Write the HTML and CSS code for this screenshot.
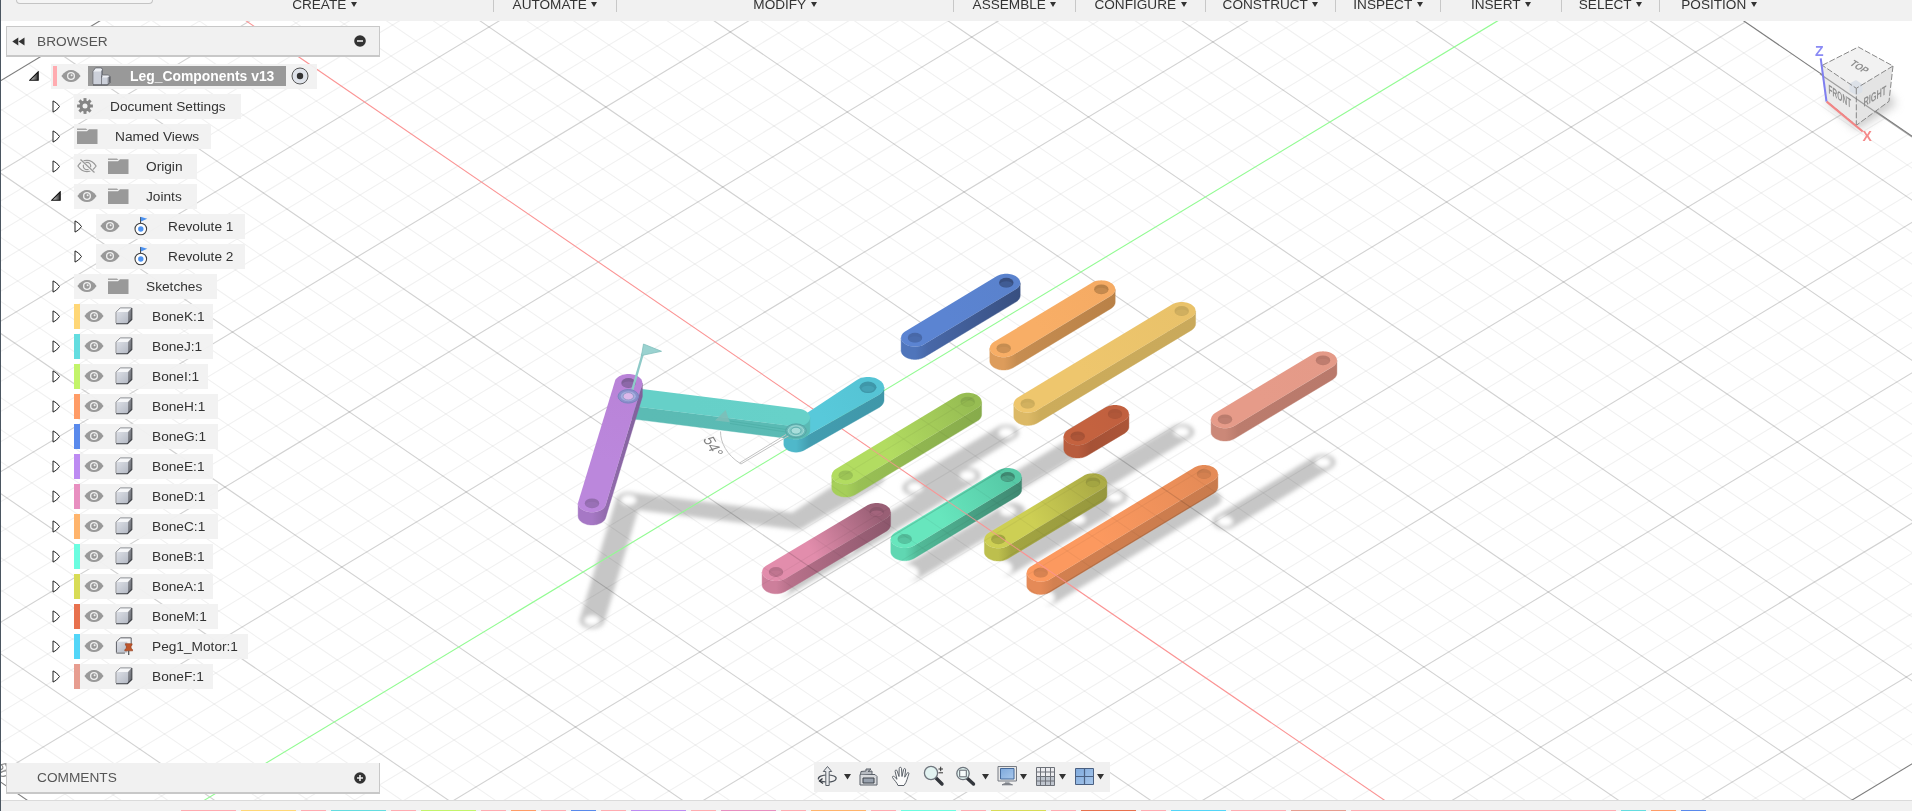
FILE: index.html
```html
<!DOCTYPE html>
<html lang="en">
<head>
<meta charset="utf-8">
<title>Leg_Components v13</title>
<link rel="stylesheet" href="styles.css">
</head>
<body>
<svg class="defs" width="0" height="0" aria-hidden="true">
  <defs>
    <linearGradient id="steel" x1="0" y1="0" x2="1" y2="1"><stop offset="0" stop-color="#dcdfe6"/><stop offset="1" stop-color="#b4b9c4"/></linearGradient>
    <linearGradient id="steelDark" x1="0" y1="0" x2="1" y2="1"><stop offset="0" stop-color="#9a9ca3"/><stop offset="1" stop-color="#5c5f66"/></linearGradient>
    <linearGradient id="tri" x1="0" y1="0" x2="1" y2="0"><stop offset="0.2" stop-color="#c4c4c4"/><stop offset="1" stop-color="#2c2c2c"/></linearGradient>
    <linearGradient id="screen" x1="0" y1="0" x2="1" y2="1"><stop offset="0" stop-color="#7ea9dc"/><stop offset="1" stop-color="#a9c8ec"/></linearGradient>
  </defs>
  <symbol id="eye" viewBox="0 0 20 14"><path d="M0.4 7C3.4 2.6 6.5.9 10 .9s6.600 1.700 9.600 6.100c-3 4.400-6.100 6.100-9.600 6.100S3.400 11.400.4 7Z" fill="#999"/><circle cx="10" cy="7" r="4" fill="#f1f1f1"/><circle cx="10" cy="7" r="2.700" fill="#999"/><circle cx="10.600" cy="6.300" r="1" fill="#eee"/></symbol>
  <symbol id="eye-off" viewBox="0 0 20 14"><path d="M.9 7C3.500 3 6.500 1.400 10 1.400S16.500 3 19.100 7C16.500 11 13.500 12.600 10 12.600S3.500 11 .9 7Z" fill="none" stroke="#999" stroke-width="1.200"/><circle cx="10" cy="7" r="3.700" fill="none" stroke="#999" stroke-width="1.200"/><circle cx="10" cy="7" r="1.300" fill="#999"/><path d="M3 .5 17 13.500" stroke="#f1f1f1" stroke-width="3"/><path d="M3.500.5 17.500 13.500" stroke="#999" stroke-width="1.200"/></symbol>
  <symbol id="folder" viewBox="0 0 21 16"><path d="M0 .5h9l1.500 1.600H0Z" fill="#a5a5a5"/><path d="M0 3.200h10l2-2h8.500V16H0Z" fill="#999"/></symbol>
  <symbol id="gear" viewBox="-8 -8 16 16"><g fill="#858585"><circle r="5.600"/><path d="M-1.500-7.900h3v15.800h-3Z"/><path d="M-1.500-7.900h3v15.800h-3Z" transform="rotate(45)"/><path d="M-1.500-7.900h3v15.800h-3Z" transform="rotate(90)"/><path d="M-1.500-7.900h3v15.800h-3Z" transform="rotate(135)"/></g><circle r="2.500" fill="#f1f1f1"/></symbol>
  <symbol id="cube" viewBox="0 0 18 18"><path d="M1.500 5 5.500 1h11l-4 4Z" fill="#f6f7f9"/><path d="M13 5l3.500-4v11.500l-3.500 4Z" fill="url(#steelDark)"/><path d="M1.500 5h11.500v11.500h-11.500Z" fill="url(#steel)"/><path d="M1 16V5.200L5.200.9h11.400" fill="none" stroke="#8d8f95"/><path d="M1 16.700h11.400l4.400-4.200V1" fill="none" stroke="#3a3c42" stroke-width="1.100"/></symbol>
  <symbol id="assembly" viewBox="0 0 19 19"><path d="M1 4 3.500 1H9l1.500 2v5h6l1.500 1.500v6.500L15.500 18H2L1 16.500Z" fill="#eef0f5"/><path d="M1.500 4.500H9v13H1.500ZM10 10.500h5.500v7H10Z" fill="#ccd0da"/><path d="M9 4 10.500 2.500V10L9 11ZM15.500 10.500 17.800 8.800v6.700l-2.300 2.200Z" fill="#8d9099"/><path d="M9.500 8.500v9M1 17V4.300L3.500.9h6l1 1.600V8h6l1.500 1.500" fill="none" stroke="#62656c" stroke-width=".8"/><path d="M1 17.900h14.600l2.300-2.300V9.500" fill="none" stroke="#3a3c42"/></symbol>
  <symbol id="pin" viewBox="0 0 18 19"><path d="M1.500 5 5.500 1h11l-4 4Z" fill="#f6f7f9"/><path d="M1.500 5h11v11.500h-11Z" fill="url(#steel)"/><path d="M1 16.500V5.200L5.200.9h11.400V7M1 17h9" fill="none" stroke="#55575d"/><path d="M10.500 7h7v1.700l-1 .5v2.600c1 .6 1.700 1.500 1.700 2.800H9.800c0-1.300.7-2.200 1.700-2.800V9.200l-1-.5Z" fill="#c0562c" stroke="#8a3514" stroke-width=".6"/><path d="M14 14.500v4.400" stroke="#444" stroke-width="1.200"/></symbol>
  <symbol id="joint" viewBox="0 0 14 20"><path d="M6.500 8V1" stroke="#4a4a4a"/><path d="M6.500.7 13.300 2.700 7 5.600Z" fill="#4c92f0"/><circle cx="6.800" cy="13" r="5.800" fill="#fff" stroke="#3f3f3f" stroke-width="1.100"/><circle cx="6.800" cy="13" r="2.700" fill="#4c92f0"/></symbol>
  <symbol id="closed" viewBox="0 0 9 13"><path d="M1 .9v11.200L4.500 10 7.500 6.500 4.500 3Z" fill="#fff" stroke="#222" stroke-width="1"/></symbol>
  <symbol id="open" viewBox="0 0 10 10"><path d="M9.200.8v8.400H.8Z" fill="url(#tri)" stroke="#111" stroke-width="1.100"/></symbol>
</svg>

<svg class="scene" id="scene" width="1912" height="811" viewBox="0 0 1912 811">
  <defs>
    <filter id="soft" x="-20%" y="-20%" width="140%" height="140%"><feGaussianBlur stdDeviation="2"/></filter>
    <filter id="softer" x="-30%" y="-30%" width="160%" height="160%"><feGaussianBlur stdDeviation="5"/></filter>
    <clipPath id="ghost"></clipPath>
  </defs>
  <g id="shadows" filter="url(#soft)"></g>
  <g id="grid"></g>
  <g id="bones"></g>
  <use href="#grid" clip-path="url(#ghost)" opacity=".75"/>
  <g class="joint-marks">
    <path d="M632 391 643 353" stroke="#8fcac8" stroke-width="2.400"/>
    <path d="M643.500 344 661.500 351.300 641.500 355.500Z" fill="#9ad2d0" stroke="#83bfbd" stroke-width=".8"/>
    <ellipse cx="628.300" cy="396.300" rx="10.300" ry="6.800" fill="#8a90cc" stroke="#7a84bf"/>
    <ellipse cx="628.300" cy="396.300" rx="7.500" ry="4.900" fill="#a3aede"/>
    <ellipse cx="628.300" cy="396.300" rx="5.200" ry="3.700" fill="#dcb8ea" stroke="#8a8fc2" stroke-width=".8"/>
    <path d="M720.500 431.500c0 11 6 23.500 20.500 32.500M741 464 789 435.500M739.500 463 786 434.500" fill="none" stroke="#c2c2c2" stroke-width="1"/>
    <path d="M730 421 786 429.500M730 423.500 786 432" stroke="#4fb0a8" stroke-width=".9"/>
    <path d="M715 420.500 725.700 410 729.700 422.300Z" fill="#7fbdb7" opacity=".85"/>
    <ellipse cx="796" cy="430.700" rx="10.300" ry="6.800" fill="#66b8b6" stroke="#57a3a4"/>
    <ellipse cx="796" cy="430.700" rx="7.800" ry="5" fill="#85c9c7" stroke="#aadedb" stroke-width=".8"/>
    <ellipse cx="796" cy="430.700" rx="5" ry="3.500" fill="#a9dedb" stroke="#4fa5a3" stroke-width=".8"/>
    <text class="angle" transform="matrix(.45 .75 -.95 .3 702.500 439)">54°</text>
  </g>
  <text class="edge-label" transform="matrix(.3 .8 -.9 .3 -4 765)">50</text>
  <g class="viewcube">
    <path d="M1824 100 1857 130 1897 104 1880 84Z" fill="#999" opacity=".5" filter="url(#softer)"/>
    <path d="M1822.300 65.300 1858.300 47 1893 66 1856.300 88.300Z" fill="#f2f2f2"/>
    <path d="M1822.300 65.300 1856.300 88.300V125.300L1826.700 101.300Z" fill="#eaeaea"/>
    <path d="M1893 66 1856.300 88.300V125.300L1889 101.300Z" fill="#e4e4e4"/>
    <path d="M1849.500 83.500 1856 80l6.500 4.500v7.500L1856.300 95l-6.800-3.500Z" fill="#dce1e8"/>
    <path d="M1822.300 65.300 1858.300 47 1893 66 1856.300 88.300ZM1856.300 88.300V125.300M1893 66 1889 101.300 1856.300 125.300 1826.700 101.300" fill="none" stroke="#888" stroke-width="1" stroke-dasharray="6 2"/>
    <path d="M1820 74.100 1912 137.100" stroke="#777" stroke-opacity=".65" stroke-width="1.200"/>
    <path d="M1820.700 58.300 1826.500 101.500" stroke="#7f7ff0" stroke-width="2"/>
    <path d="M1826.700 101.700 1862.700 131.500" stroke="#f28585" stroke-width="2.200"/>
    <text class="face" transform="matrix(.7 .42 -.7 .62 1849 64.500)">TOP</text>
    <text class="face" transform="matrix(.6 .4 .02 1.150 1828.500 93)">FRONT</text>
    <text class="face" transform="matrix(.66 -.38 -.02 1.150 1863.500 107)">RIGHT</text>
    <text class="axis z" x="1815" y="56">Z</text>
    <text class="axis x" x="1862.500" y="140.500">X</text>
  </g>
</svg>

<div class="app">
  <header class="toolbar">
    <span class="workspace"></span>
    <nav class="menus">
      <span>CREATE<i></i></span><span>AUTOMATE<i></i></span><span>MODIFY<i></i></span><span>ASSEMBLE<i></i></span><span>CONFIGURE<i></i></span><span>CONSTRUCT<i></i></span><span>INSPECT<i></i></span><span>INSERT<i></i></span><span>SELECT<i></i></span><span>POSITION<i></i></span>
    </nav>
  </header>

  <main class="viewport">
    <section class="browser">
      <div class="panel-title">
        <svg width="13" height="9" viewBox="0 0 13 9"><path d="M6.300.5v8L.3 4.500ZM12.500.5v8l-6-4Z" fill="#333"/></svg>
        <span>BROWSER</span>
        <svg class="toggle" width="12" height="12" viewBox="0 0 12 12"><circle cx="6" cy="6" r="5.800" fill="#333"/><path d="M3 6h6" stroke="#eee" stroke-width="1.600"/></svg>
      </div>
      <ul class="tree">
        <li class="root"><svg class="arrow open"><use href="#open"/></svg><div class="row"><b class="root-bar"></b><svg class="eye"><use href="#eye"/></svg><div class="root-name"><svg class="asm"><use href="#assembly"/></svg><span>Leg_Components v13</span></div><svg class="radio" viewBox="0 0 18 18"><circle cx="9" cy="9" r="8" fill="#dfe3ea" stroke="#555"/><circle cx="9" cy="9" r="3.200" fill="#333"/></svg></div></li>
        <li class="settings"><svg class="arrow"><use href="#closed"/></svg><div class="row"><svg class="gear"><use href="#gear"/></svg><span>Document Settings</span></div></li>
        <li class="views"><svg class="arrow"><use href="#closed"/></svg><div class="row"><svg class="folder"><use href="#folder"/></svg><span>Named Views</span></div></li>
        <li class="group"><svg class="arrow"><use href="#closed"/></svg><div class="row w123"><svg class="eye"><use href="#eye-off"/></svg><svg class="folder"><use href="#folder"/></svg><span>Origin</span></div></li>
        <li class="group"><svg class="arrow open"><use href="#open"/></svg><div class="row w123"><svg class="eye"><use href="#eye"/></svg><svg class="folder"><use href="#folder"/></svg><span>Joints</span></div></li>
        <li class="joint"><svg class="arrow"><use href="#closed"/></svg><div class="row"><svg class="eye"><use href="#eye"/></svg><svg class="jicon"><use href="#joint"/></svg><span>Revolute 1</span></div></li>
        <li class="joint"><svg class="arrow"><use href="#closed"/></svg><div class="row"><svg class="eye"><use href="#eye"/></svg><svg class="jicon"><use href="#joint"/></svg><span>Revolute 2</span></div></li>
        <li class="group"><svg class="arrow"><use href="#closed"/></svg><div class="row w143"><svg class="eye"><use href="#eye"/></svg><svg class="folder"><use href="#folder"/></svg><span>Sketches</span></div></li>
        <li class="bone"><svg class="arrow"><use href="#closed"/></svg><div class="row yellow"><svg class="eye"><use href="#eye"/></svg><svg class="cube"><use href="#cube"/></svg><span>BoneK:1</span></div></li>
        <li class="bone"><svg class="arrow"><use href="#closed"/></svg><div class="row cyan"><svg class="eye"><use href="#eye"/></svg><svg class="cube"><use href="#cube"/></svg><span>BoneJ:1</span></div></li>
        <li class="bone"><svg class="arrow"><use href="#closed"/></svg><div class="row lime narrow"><svg class="eye"><use href="#eye"/></svg><svg class="cube"><use href="#cube"/></svg><span>BoneI:1</span></div></li>
        <li class="bone"><svg class="arrow"><use href="#closed"/></svg><div class="row orange wide"><svg class="eye"><use href="#eye"/></svg><svg class="cube"><use href="#cube"/></svg><span>BoneH:1</span></div></li>
        <li class="bone"><svg class="arrow"><use href="#closed"/></svg><div class="row blue wide"><svg class="eye"><use href="#eye"/></svg><svg class="cube"><use href="#cube"/></svg><span>BoneG:1</span></div></li>
        <li class="bone"><svg class="arrow"><use href="#closed"/></svg><div class="row purple"><svg class="eye"><use href="#eye"/></svg><svg class="cube"><use href="#cube"/></svg><span>BoneE:1</span></div></li>
        <li class="bone"><svg class="arrow"><use href="#closed"/></svg><div class="row magenta wide"><svg class="eye"><use href="#eye"/></svg><svg class="cube"><use href="#cube"/></svg><span>BoneD:1</span></div></li>
        <li class="bone"><svg class="arrow"><use href="#closed"/></svg><div class="row apricot wide"><svg class="eye"><use href="#eye"/></svg><svg class="cube"><use href="#cube"/></svg><span>BoneC:1</span></div></li>
        <li class="bone"><svg class="arrow"><use href="#closed"/></svg><div class="row mint"><svg class="eye"><use href="#eye"/></svg><svg class="cube"><use href="#cube"/></svg><span>BoneB:1</span></div></li>
        <li class="bone"><svg class="arrow"><use href="#closed"/></svg><div class="row olive"><svg class="eye"><use href="#eye"/></svg><svg class="cube"><use href="#cube"/></svg><span>BoneA:1</span></div></li>
        <li class="bone"><svg class="arrow"><use href="#closed"/></svg><div class="row rust wide"><svg class="eye"><use href="#eye"/></svg><svg class="cube"><use href="#cube"/></svg><span>BoneM:1</span></div></li>
        <li class="bone"><svg class="arrow"><use href="#closed"/></svg><div class="row sky widest"><svg class="eye"><use href="#eye"/></svg><svg class="cube"><use href="#pin"/></svg><span>Peg1_Motor:1</span></div></li>
        <li class="bone"><svg class="arrow"><use href="#closed"/></svg><div class="row salmon"><svg class="eye"><use href="#eye"/></svg><svg class="cube"><use href="#cube"/></svg><span>BoneF:1</span></div></li>
      </ul>
    </section>

    <section class="comments">
      <span>COMMENTS</span>
      <svg width="12" height="12" viewBox="0 0 12 12"><circle cx="6" cy="6" r="5.800" fill="#333"/><path d="M3 6h6M6 3v6" stroke="#eee" stroke-width="1.600"/></svg>
    </section>

    <nav class="navbar">
      <svg width="296" height="30" viewBox="0 0 296 30">
        <g stroke="#5b6169" fill="none">
          <path d="M4.500 17.500c-1-3 4-4.500 9-4.500s9.500 1.500 8.500 4-5 3-8.500 3-6-.5-8-1.500" stroke="#4a5058" stroke-width="1.200"/>
          <path d="M11.800 23.500V9.500H9.300L13.500 4.500l4.200 5h-2.500v14Z" fill="#e8eaed"/>
          <path d="M8.500 16.500 5.500 19l3.500 2.500" stroke="#30353c" stroke-width="1.300"/>
          <path d="M46 12.500h15l2 2v8.500H46Z" fill="#d8dadd"/><path d="M49 16h11v5H49Z" fill="#98a1ad" stroke="#3c424b"/><path d="M46.500 12.500 47 9.500l5-.5v-2l5 0-3 2.500 4-.5v3" fill="#b7bbc1"/>
          <path d="M84 23.500c-1-3-4-5.500-5.500-8-.6-1.400 1.300-1.700 2.200-.5l2.300 2.300-1.900-8c-.1-1.700 1.800-1.700 2.100-.2l1.800 5.400.2-8c0-1.600 2.200-1.600 2.300 0l.5 8 1.600-7c.3-1.500 2.200-1.200 2 .3l-.9 7.400 2.400-4c.8-1.200 2.300-.5 1.700.8-1.300 3.100-1.700 7.600-4.800 11.500Z" fill="#fbfbfb"/>
        </g>
        <path d="m121.500 15.500 6.500 6.500" stroke="#33373d" stroke-width="3.400" stroke-linecap="round"/><circle cx="117" cy="11" r="6.600" fill="#e2f3f1" stroke="#6e757d" stroke-width="1.300"/><path d="M124.500 7h4.500M126.700 4.700v4.500M124.500 10.800h4.500" stroke="#333" stroke-width="1"/>
        <path d="m153.500 16.500 6 5.500" stroke="#33373d" stroke-width="3.400" stroke-linecap="round"/><circle cx="149" cy="11.500" r="6.200" fill="#e2f3f1" stroke="#6e757d" stroke-width="1.300"/><path d="M145.700 8.200h6.600v6.600h-6.600Z" fill="#f5fbfb" stroke="#60666e"/>
        <path d="M184 4.500h18.500v14.500H184Z" fill="#e7e7e7" stroke="#777b82"/><path d="M186.500 6.500h13.500v10.500h-13.500Z" fill="url(#screen)" stroke="#456a9c"/><path d="M191 19h4.500v3H191Z" fill="#a9adb3"/><path d="M188 22.800c2-1.600 8-1.600 10.500 0Z" fill="#7a7e85" stroke="#7a7e85"/>
        <path d="M222.500 5.500h18v18h-18Z" fill="#ececef"/><path d="M222.500 14.500h18v9h-18Z" fill="#bfc5ce"/><path d="M222.500 5.500h18v18h-18ZM226.500 5.500v18M231.500 5.500v18M236.500 5.500v18M222.500 10h18M222.500 14.500h18M222.500 19h18" fill="none" stroke="#6d7178"/>
        <path d="M261.500 6.500h18v16h-18Z" fill="url(#screen)" stroke="#4a6082"/><path d="M270.500 6.500v16M261.500 14.500h18" stroke="#4a6082" stroke-width="1.200"/>
        <path d="M30 12h7l-3.500 5.500ZM168 12h7l-3.500 5.500ZM206 12h7l-3.500 5.500ZM245 12h7l-3.500 5.500ZM283 12h7l-3.500 5.500Z" fill="#333"/>
      </svg>
    </nav>
  </main>

  <footer class="timeline" id="timeline"></footer>
</div>
<script src="scene.js"></script>
</body>
</html>
```

FILE: styles.css
```css
* { box-sizing: border-box; }
body {
  margin: 0;
  width: 1912px;
  height: 811px;
  overflow: hidden;
  position: relative;
  background: #fff;
  color: #333;
  font: 13.7px "Liberation Sans", Arial, sans-serif;
}
.defs, .scene { position: absolute; left: 0; top: 0; }
.app {
  position: relative;
  height: 811px;
  display: flex;
  flex-direction: column;
  border-left: 1px solid #4b5661;
}

/* top toolbar */
.toolbar { height: 21px; background: #f1f1f1; display: flex; overflow: hidden; }
.workspace {
  width: 137px; height: 4px; margin-left: 15px; margin-right: 3px;
  border: 1px solid #c4c4c4; border-top: 0; border-radius: 0 0 5px 5px; background: #f5f5f5;
}
.menus {
  display: grid;
  grid-template-columns: 338px 123px 337px 122px 130px 130px 105px 121px 98px 118px;
}
.menus span {
  height: 12px; line-height: 10px;
  display: flex; justify-content: center; align-items: flex-start;
  border-right: 1px solid #c8c8c8;
  font-size: 13.6px;
}
.menus span:last-child { border-right: 0; }
.menus i {
  margin: 1.5px 0 0 4.5px;
  border: 3.5px solid transparent; border-top: 5px solid #333; border-bottom: 0;
}

.viewport { flex: 1; display: flex; flex-direction: column; position: relative; }

/* browser panel */
.browser { width: 374px; margin: 5px 0 0 5px; }
.panel-title {
  height: 31px; padding: 0 13px 0 5px;
  display: flex; align-items: center;
  background: #f1f1f1; border: 1px solid #c8c8c8; border-bottom-width: 2px;
  color: #555;
}
.panel-title span { margin-left: 12px; font-size: 13.7px; }
.panel-title .toggle { margin-left: auto; }
.tree { list-style: none; margin: 4px 0 0; padding: 0; }
.tree li { height: 30px; display: flex; align-items: center; padding-left: 46px; }
.tree .row {
  height: 25px; display: flex; align-items: center;
  background: rgba(241, 241, 241, .95);
}
.tree svg { flex: none; }
.arrow { width: 9px; height: 13px; margin-right: 13px; }
.arrow.open { width: 10px; height: 10px; margin-right: 12px; margin-left: -1px; padding: 0; }
.group .arrow.open { margin-right: 13px; }
.eye { width: 20px; height: 14px; }
.folder { width: 21px; height: 16px; }
.cube { width: 18px; height: 18px; }

.tree .root { padding-left: 24px; }
.root .row { width: 266px; margin-left: 0; padding-left: 2px; }
.root-bar { width: 4px; height: 20px; background: #ffabb0; margin-right: 4px; }
.root-name {
  width: 198px; height: 20px; margin: 0 5px 0 7px; padding-left: 4px;
  display: flex; align-items: center; background: #999; color: #fff; font-weight: bold;
}
.root-name .asm { width: 19px; height: 19px; }
.root-name span { margin-left: 19px; font-size: 13.9px; white-space: nowrap; }
.radio { width: 18px; height: 18px; }
.root .arrow.open { margin-left: -1px; margin-right: 12px; }

.settings .row { width: 167px; padding-left: 3px; }
.gear { width: 16px; height: 16px; }
.settings span { margin-left: 17px; }
.views .row { width: 137px; padding-left: 3px; }
.views span { margin-left: 17px; }
.group .row { padding-left: 3px; }
.group .folder { margin-left: 11px; }
.group span { margin-left: 17px; }
.w123 { width: 123px; }
.w143 { width: 143px; }
.tree .joint { padding-left: 68px; }
.joint .arrow { margin-right: 13px; }
.joint .row { width: 149px; padding-left: 4px; }
.jicon { width: 14px; height: 20px; margin-left: 14px; }
.joint span { margin-left: 20px; }
.bone .row { width: 139px; padding-left: 3.500px; border-style: solid; border-width: 0 0 0 6px; }
.bone .row.narrow { width: 134px; }
.bone .row.wide { width: 144px; }
.bone .row.widest { width: 174px; }
.bone .cube { margin-left: 11.500px; }
.bone span { margin-left: 19px; }
.tree span { white-space: nowrap; color: #333; }
.tree .root span { color: #fff; }

.yellow { border-color: #ffd777; }
.cyan { border-color: #64dde0; }
.lime { border-color: #c3f46a; }
.orange { border-color: #ff9c67; }
.blue { border-color: #5a8aec; }
.purple { border-color: #bd8bf2; }
.magenta { border-color: #e88fc0; }
.apricot { border-color: #ffb46c; }
.mint { border-color: #6bfde0; }
.olive { border-color: #d8dc56; }
.rust { border-color: #e8714e; }
.sky { border-color: #53d6f8; }
.salmon { border-color: #e79d90; }
.pink { border-color: #ffabb0; }

/* comments bar */
.comments {
  width: 374px; height: 31px; margin: auto 0 6px 5px; padding: 0 13px 0 30px;
  display: flex; align-items: center; justify-content: space-between;
  background: #f1f1f1; border: 1px solid #c8c8c8; border-top: 0; border-bottom-width: 2px;
  color: #555;
}

/* navigation bar floats over the canvas */
.navbar { position: absolute; left: 813px; bottom: 8px; width: 296px; height: 30px; background: #f0f0f0; }

/* timeline strip */
.timeline {
  height: 11px; background: #f1f1f1; border-top: 1px solid #dadada;
  display: flex; align-items: flex-end; gap: 5px; padding-left: 180px;
}
.timeline b { height: 1px; border-style: solid; border-width: 1px 0 0; flex: none; }

/* canvas text */
.angle { font: 16px "Liberation Sans", Arial, sans-serif; fill: #808080; }
.edge-label { font: 15px "Liberation Sans", Arial, sans-serif; fill: #888; }
.face { font: bold 11px "Liberation Sans", Arial, sans-serif; fill: #8f8f8f; }
.axis { font: bold 14px "Liberation Sans", Arial, sans-serif; }
.axis.z { fill: #8a8af5; }
.axis.x { fill: #f58a8a; }
```

FILE: scene.js
```js
const NS = 'http://www.w3.org/2000/svg';
const byId = id => document.getElementById(id);
function add(parent, tag, attrs) {
  const el = document.createElementNS(NS, tag);
  for (const k in attrs) el.setAttribute(k, attrs[k]);
  parent.appendChild(el);
  return el;
}

/* ground grid: origin plus one major cell along each axis */
const O = [832, 422], A = [116.85, 80], B = [124.45, -75];
const at = (i, j) => [O[0] + i * A[0] + j * B[0], O[1] + i * A[1] + j * B[1]];
const I0 = -5.6, I1 = 6.6, J0 = -5.8, J1 = 6.4;
function line(p, q, stroke, width) {
  add(byId('grid'), 'line', { x1: p[0], y1: p[1], x2: q[0], y2: q[1], stroke, 'stroke-width': width });
}
function style(n, lo, hi) {
  if (n === lo || n === hi) return ['#7d7d7d', 1.1];
  return n % 5 === 0 ? ['rgba(0,0,0,.18)', 1.1] : ['rgba(0,0,0,.06)', 1.1];
}
for (const major of [false, true]) {
  for (let n = -28; n <= 33; n++) {
    const edge = n === -28 || n === 33;
    if ((n % 5 === 0 || edge) !== major || n === 0) continue;
    line(at(n / 5, J0), at(n / 5, J1), ...style(n, -28, 33));
  }
  for (let n = -29; n <= 32; n++) {
    const edge = n === -29 || n === 32;
    if ((n % 5 === 0 || edge) !== major || n === 0) continue;
    line(at(I0, n / 5), at(I1, n / 5), ...style(n, -29, 32));
  }
}
line(at(0, J0), at(0, J1), '#92fb92', 1.1);
line(at(I0, 0), at(I1, 0), '#fb9494', 1.1);

/* rounded bars: end points, shadow drop, colours [top near, top far, cap, flank near, flank far] */
const K = 0.645, H = 12.8;
const bones = [
  { p: [915, 337.7], q: [1006.3, 282.7], drop: 150, c: ['#5b84d2', '#5a82cd', '#4f75bb', '#4868a8', '#384f80'] },
  { p: [1003.7, 348.3], q: [1101.3, 289.3], drop: 141, c: ['#f8ae66', '#f5ab64', '#dd9c5b', '#c68d51', '#b98147'] },
  { p: [1027.7, 403.7], q: [1181.7, 311], drop: 121, c: ['#eec66d', '#e9c26a', '#dcb966', '#ccac5b', '#c9a95b'] },
  { p: [1225, 419.3], q: [1323, 360.3], drop: 102, c: ['#e69b89', '#e49a88', '#cb8878', '#bb7c6d', '#b9796b'] },
  { p: [1077.7, 436.3], q: [1115, 414], drop: 83, c: ['#c4623f', '#c1603f', '#b85c3d', '#a65236', '#ac5538'] },
  { p: [796, 431.5], q: [868, 387.3], drop: 90, r: [12.2, 16], c: ['#58c9da', '#55c4d5', '#4fb8ca', '#439db0', '#3f97a9'] },
  { p: [628.5, 396.5], q: [796, 417.5], drop: 104, nohole: true, c: ['#66d0c8', '#67d1c9', '#5bbbb4', '#5bbbb4', '#5abab4'] },
  { p: [592, 503.3], q: [628.5, 383], drop: 117.2, c: ['#bb87dc', '#b983d8', '#a678c5', '#936cae', '#80609a'] },
  { p: [845.7, 475.3], q: [967.7, 401.7], drop: 74, ghost: true, c: ['#b2dc61', '#97bd53', '#a6cf5a', '#99c055', '#87ab4b'] },
  { p: [776, 572], q: [876.7, 512], drop: 17, shift: 4, ghost: true, c: ['#e28dac', '#995f75', '#cd7f9b', '#b8718b', '#8c576c'] },
  { p: [904.7, 539], q: [1007.7, 477], drop: 34, shift: 5, ghost: true, c: ['#67e6bd', '#56c9a6', '#60d7b2', '#52ba98', '#3f8871'] },
  { p: [998.3, 539.3], q: [1093, 482.3], drop: 29, shift: 5, solidFar: true, ghost: true, c: ['#cdcf54', '#acac46', '#bdbf4d', '#a3a542', '#96973d'] },
  { p: [1040.7, 572.7], q: [1204, 474], drop: 25, shift: 5, solidFar: true, ghost: true, c: ['#fc995f', '#e58b57', '#e58a57', '#d28050', '#c97b4d'] }
];
const fmt = pts => pts.map(p => p[0].toFixed(2) + ',' + p[1].toFixed(2)).join(' ');
/* boundary of the projected bar between two direction angles */
function rim(b, from, to) {
  const [r1, r2] = b.r || [13.9, 13.9];
  const out = [];
  for (let s = 0; s <= 60; s++) {
    const t = from + (to - from) * s / 60;
    const nx = Math.cos(t), ny = Math.sin(t);
    const d1 = b.p[0] * nx + b.p[1] / K * ny + r1, d2 = b.q[0] * nx + b.q[1] / K * ny + r2;
    const [c, r] = d1 > d2 ? [b.p, r1] : [b.q, r2];
    out.push([c[0] + r * nx, c[1] + r * ny * K]);
  }
  return out;
}
const defs = document.querySelector('#scene defs');
function gradient(id, p, q, stops) {
  const g = add(defs, 'linearGradient', { id, gradientUnits: 'userSpaceOnUse', x1: p[0], y1: p[1], x2: q[0], y2: q[1] });
  stops.forEach(([offset, color]) => add(g, 'stop', { offset, 'stop-color': color }));
}
const shadows = byId('shadows'), layer = byId('bones');
bones.forEach(b => {
  const [r1, r2] = b.r || [12.5, 12.5];
  add(shadows, 'polygon', { points: fmt(rim({ ...b, r: [Math.min(r1, 12.5), r2] }, 0, 2 * Math.PI)), fill: '#c6c6c6', transform: `translate(${b.shift || 0} ${b.drop})` });
});
bones.forEach(b => {
  if (b.nohole || b.r) return;
  [b.p, b.q].forEach(c => {
    if (b.solidFar && c === b.q) return;
    const low = b.shift && c === b.p;
    add(shadows, 'ellipse', { cx: c[0] + (low ? b.shift - 4 : 0), cy: c[1] + b.drop, rx: low ? 13 : 7.8, ry: low ? 8.5 : 5.1, fill: '#fff' });
  });
});
bones.forEach((b, n) => {
  gradient('t' + n, b.p, b.q, [[0, b.c[0]], [.35, b.c[0]], [1, b.c[1]]]);
  const span = b.q[0] - b.p[0] + 28, x = b.p[0] - 14;
  gradient('s' + n, [x, 0], [x + span, 0], [[0, b.c[2]], [14 / span, b.c[2]], [27 / span, b.c[3]], [1, b.c[4]]]);
  const low = rim(b, 0, Math.PI);
  const side = low.concat(low.map(p => [p[0], p[1] + H]).reverse());
  add(layer, 'polygon', { points: fmt(side), fill: `url(#s${n})`, stroke: `url(#s${n})`, 'stroke-width': .4 });
  add(layer, 'polygon', { points: fmt(rim(b, 0, 2 * Math.PI)), fill: `url(#t${n})` });
  if (!b.nohole) {
    [b.p, b.q].forEach((c, k) => {
      if (b.r && k === 0) return;
      add(layer, 'ellipse', { cx: c[0], cy: c[1], rx: b.r ? 8.5 : 7.2, ry: b.r ? 5.8 : 4.9, fill: b.c[k ? 4 : 3] });
      add(layer, 'path', { d: `M${c[0] - 6.6} ${c[1] + 1.5}a6.8 4 0 0 1 13.2 0a7 4.6 0 0 1-13.2 0Z`, fill: b.c[2], opacity: .35 });
    });
  }
  if (b.ghost) {
    add(byId('ghost'), 'polygon', { points: fmt(side) });
    add(byId('ghost'), 'polygon', { points: fmt(rim(b, 0, 2 * Math.PI)) });
  }
});

/* timeline feature groups: [colour, width] */
[['pink', 55], ['yellow', 55], ['pink', 25], ['cyan', 55], ['pink', 25], ['lime', 55], ['pink', 25], ['orange', 25],
 ['pink', 25], ['blue', 25], ['pink', 25], ['purple', 55], ['pink', 25], ['magenta', 55], ['pink', 25], ['apricot', 55],
 ['pink', 25], ['mint', 55], ['pink', 25], ['olive', 55], ['pink', 25], ['rust', 55], ['pink', 25], ['sky', 55],
 ['pink', 55], ['salmon', 55], ['pink', 265], ['cyan', 25], ['orange', 25], ['blue', 25]
].forEach(([name, width]) => {
  const bar = document.createElement('b');
  bar.className = name;
  bar.style.width = width + 'px';
  byId('timeline').appendChild(bar);
});
```
